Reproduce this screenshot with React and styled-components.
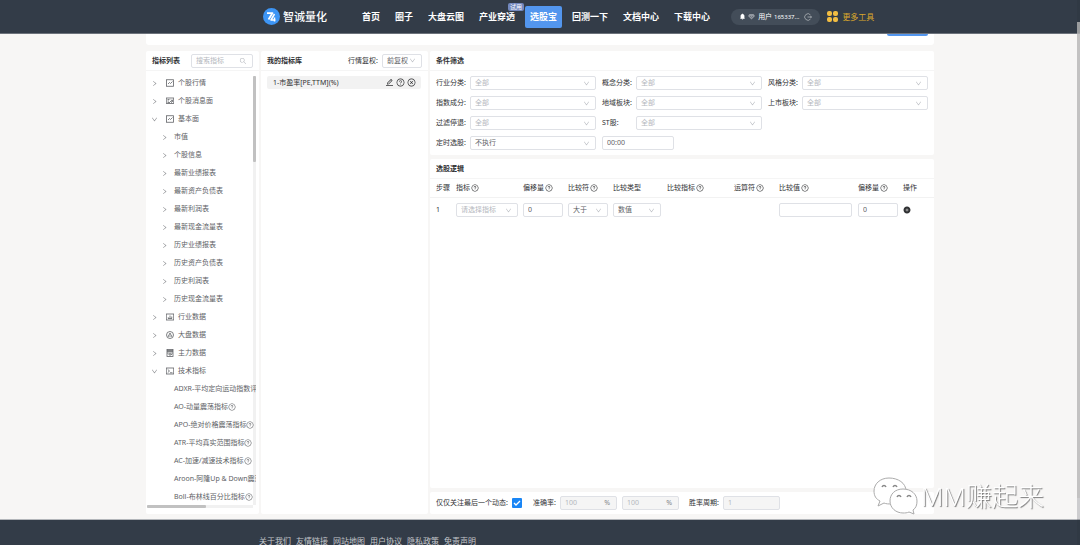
import React from 'react';
import styled, { createGlobalStyle, css } from 'styled-components';
import {
  AiOutlineQuestionCircle,
  AiOutlineCloseCircle,
  AiOutlineEdit,
  AiOutlineDown,
  AiOutlineRight,
  AiOutlineSearch,
  AiFillPlusCircle,
  AiFillBell,
} from 'react-icons/ai';

const GlobalStyle = createGlobalStyle`
  * { box-sizing: border-box; }
  html, body { margin: 0; overflow: hidden; }
  body {
    background: #f7f6f5;
    color: #303133;
    font: 7px/14px "Noto Sans", "Noto Sans CJK SC", sans-serif;
  }
  button, input, select { font: inherit; color: inherit; margin: 0; }
  button { display: block; border: 0; padding: 0; background: none; cursor: pointer; }
  a { color: inherit; text-decoration: none; }
  ul { list-style: none; margin: 0; padding: 0; }
  svg { display: block; flex: none; }
`;

/* ---------- header ---------- */

const Header = styled.header`
  position: relative;
  z-index: 2;
  height: 34px;
  background: #333c48;
  border-bottom: 1px solid #6c727b;
`;

const HeaderInner = styled.div`
  display: flex;
  align-items: center;
  max-width: 788px;
  height: 33px;
  margin: 0 auto;
  padding-left: 117px;
`;

const Brand = styled.a`
  display: flex;
  align-items: center;
  gap: 3px;
  width: 99px;
  color: #fff;
  font-size: 11px;
  font-weight: 500;
`;

const Nav = styled.nav`
  display: flex;
  align-items: center;
  gap: 15px;
  color: #fff;
  font-size: 9px;
  font-weight: 700;
  white-space: nowrap;
`;

const NavLink = styled.a`
  position: relative;
  line-height: 22px;
  ${(p) =>
    p.$active &&
    css`
      margin: 0 -5px;
      padding: 0 5px;
      border-radius: 2px;
      background: #5396ee;
    `}
`;

const TrialTag = styled.span`
  position: absolute;
  top: -3px;
  right: -9px;
  padding: 0 2px;
  border-radius: 2px;
  background: #7388bd;
  font-size: 6px;
  font-weight: 400;
  line-height: 8px;
`;

const UserPill = styled.button`
  display: flex;
  align-items: center;
  gap: 2px;
  height: 16px;
  margin-left: 21px;
  padding: 0 8px;
  border-radius: 8px;
  background: #434d59;
  color: #fff;
  white-space: nowrap;
`;

const UserName = styled.span`
  margin: 0 3px 0 1px;
`;

const UserNumber = styled.span`
  font-size: 6px;
`;

const MoreTools = styled.a`
  display: flex;
  align-items: center;
  gap: 4px;
  margin-left: 7px;
  color: #d9a72c;
  font-size: 8px;
  white-space: nowrap;
`;

/* ---------- page frame ---------- */

const Container = styled.div`
  max-width: 788px;
  margin: 0 auto;
`;

const TopStrip = styled.div`
  display: flex;
  justify-content: flex-end;
  align-items: flex-start;
  height: 11px;
  margin-bottom: 6px;
  padding-right: 6px;
  border-radius: 0 0 3px 3px;
  background: #fff;
`;

const StripButton = styled.button`
  width: 41px;
  height: 2px;
  border-radius: 0 0 2px 2px;
  background: #5396ee;
`;

const Columns = styled.main`
  display: grid;
  grid-template-columns: 113px 167px minmax(0, 1fr);
  gap: 2px;
  height: calc(100vh - 82px);
`;

const RightColumn = styled.div`
  display: flex;
  flex-direction: column;
  gap: 4px;
  min-height: 0;
`;

const Card = styled.section`
  display: flex;
  flex-direction: column;
  flex: ${(p) => (p.$grow ? '1' : 'none')};
  min-width: 0;
  min-height: 0;
  border-radius: 2px;
  background: #fff;
`;

const CardHead = styled.div`
  display: flex;
  align-items: center;
  justify-content: space-between;
  flex: none;
  height: 20px;
  padding: 0 6px;
  border-bottom: 1px solid #f5f5f5;
  white-space: nowrap;
`;

const Title = styled.h2`
  margin: 0;
  font-size: 7px;
  font-weight: 700;
`;

/* ---------- fields ---------- */

const Frame = styled.div`
  position: relative;
  display: flex;
  align-items: center;
  flex: ${(p) => (p.$width ? 'none' : '1')};
  width: ${(p) => (p.$width ? `${p.$width}px` : 'auto')};
  height: 14px;
  border: 1px solid #dfe1e6;
  border-radius: 2px;
  background: ${(p) => (p.$disabled ? '#f5f5f5' : '#fff')};
  color: ${(p) => (p.$muted ? '#b4b7bd' : '#606266')};
  svg { margin-right: 5px; color: #b4b7bd; }
`;

const NativeSelect = styled.select`
  appearance: none;
  flex: 1;
  min-width: 0;
  height: 12px;
  padding: 0 0 0 4px;
  border: 0;
  outline: 0;
  background: none;
  line-height: 12px;
`;

const NativeInput = styled.input`
  flex: 1;
  min-width: 0;
  width: 100%;
  height: 12px;
  padding: 0 4px;
  border: 0;
  outline: 0;
  background: none;
  line-height: 12px;
  &::placeholder { color: #b4b7bd; }
`;

const Unit = styled.span`
  padding-right: 6px;
  color: #85878b;
`;

const HeadField = styled.div`
  display: flex;
  align-items: center;
  gap: 4px;
`;

/* ---------- indicator tree ---------- */

const TreeArea = styled.div`
  display: grid;
  grid-template-columns: minmax(0, 1fr) 3px;
  flex: 1;
  min-height: 0;
  padding: 3px 3px 0 1px;
`;

const TreeView = styled.ul`
  z-index: 1;
  grid-column: 1 / 3;
  grid-row: 1;
  overflow: hidden;
  min-height: 0;
`;

const TreeRow = styled.button`
  display: flex;
  align-items: center;
  width: 100%;
  height: 18px;
  padding-left: ${(p) => [4, 14, 27][p.$level]}px;
  color: #606266;
  white-space: nowrap;
`;

const Arrow = styled.span`
  display: flex;
  width: ${(p) => (p.$level ? 13 : 15)}px;
  color: #85878b;
`;

const TreeIcon = styled.span`
  display: flex;
  width: 12px;
`;

const VerticalTrack = styled.div`
  grid-column: 2;
  grid-row: 1;
  margin-top: 2px;
  background: #f1f1f1;
`;

const VerticalThumb = styled.div`
  height: 20%;
  border-radius: 1px;
  background: #c1c1c1;
`;

const HorizontalTrack = styled.div`
  flex: none;
  height: 3px;
  margin: 0 6px 6px 1px;
  background: #f1f1f1;
`;

const HorizontalThumb = styled.div`
  width: 56%;
  height: 3px;
  border-radius: 1px;
  background: #c1c1c1;
`;

/* ---------- my indicators ---------- */

const SavedItem = styled.div`
  display: flex;
  align-items: center;
  justify-content: space-between;
  height: 13px;
  margin: 5px 7px 0 6px;
  padding: 0 5px 0 6px;
  border-radius: 2px;
  background: #f2f2f2;
  white-space: nowrap;
`;

const Actions = styled.div`
  display: flex;
  gap: 2px;
`;

/* ---------- filters ---------- */

const FilterGrid = styled.div`
  display: grid;
  grid-template-columns: repeat(3, minmax(0, 1fr));
  gap: 6px;
  padding: 5px 6px;
`;

const FilterCell = styled.div`
  display: flex;
  align-items: center;
  grid-column: ${(p) => (p.$first ? '1' : 'auto')};
`;

const FilterLabel = styled.label`
  width: 34px;
  white-space: nowrap;
`;

/* ---------- logic table ---------- */

const LogicTable = styled.table`
  width: 100%;
  table-layout: fixed;
  border-collapse: collapse;
  th, td { padding: 0; text-align: left; font-weight: 400; white-space: nowrap; }
  th { height: 18px; border-bottom: 1px solid #f2f2f2; }
  td { height: 26px; }
  th:first-child, td:first-child { padding-left: 6px; }
`;

const HeadCell = styled.span`
  display: flex;
  align-items: center;
  gap: 1px;
`;

/* ---------- accuracy bar ---------- */

const BottomBar = styled.div`
  display: flex;
  align-items: center;
  height: 22px;
  padding: 0 6px;
  white-space: nowrap;
`;

const BarLabel = styled.label`
  width: ${(p) => p.$width}px;
`;

const CheckWrap = styled.span`
  position: relative;
  display: flex;
  width: 10px;
  height: 10px;
  margin-right: 11px;
  svg { position: absolute; inset: 0; pointer-events: none; }
`;

const Checkbox = styled.input`
  appearance: none;
  width: 10px;
  height: 10px;
  border-radius: 1px;
  background: #b9bcc2;
  &:checked { background: #1a86f5; }
`;

const BarFields = styled.div`
  display: flex;
  gap: 5px;
  margin-right: 10px;
`;

/* ---------- footer and overlays ---------- */

const Footer = styled.footer`
  margin-top: 5px;
  padding-top: 17px;
  border-top: 1px solid #b3b6ba;
  background: #333c48;
  color: #c4c7cb;
  font-size: 8px;
  line-height: 8px;
`;

const FooterLinks = styled.div`
  display: flex;
  gap: 5px;
  max-width: 788px;
  margin: 0 auto;
  padding-left: 113px;
`;

const PageTrack = styled.div`
  position: fixed;
  z-index: 3;
  top: 0;
  right: 0;
  bottom: 0;
  width: 3px;
  padding-top: 22px;
  background: rgba(40, 45, 54, 0.2);
`;

const PageThumb = styled.div`
  height: 91%;
  background: rgba(190, 190, 190, 0.75);
`;

const Watermark = styled.div`
  position: fixed;
  z-index: 4;
  right: 36px;
  bottom: 29px;
  display: flex;
  align-items: center;
  gap: 3px;
  color: #fff;
  font-size: 26px;
  font-weight: 300;
  line-height: 40px;
  text-shadow: 1px 1px 1px #777;
`;

/* ---------- drawings ---------- */

const BrandMark = () => (
  <svg width="17" height="17" viewBox="0 0 34 34">
    <circle cx="17" cy="17" r="17" fill="#3d95f5" />
    <path d="M8 10h11L11 23" fill="none" stroke="#fff" strokeWidth="3.5" strokeLinejoin="round" />
    <path d="M23 12l-7 12h9M23 19v8" fill="none" stroke="#fff" strokeWidth="3" strokeLinejoin="round" />
  </svg>
);

const glyphs = {
  trend: (
    <>
      <rect x="1" y="1.5" width="14" height="13" />
      <path d="M4 10l3-3 2 2 4-4" />
    </>
  ),
  news: (
    <>
      <rect x="0.5" y="2" width="15" height="11" />
      <path d="M3 5h4M3 8h3M3 11h5M8 8l3 3 3-6M10 5l3 5" />
    </>
  ),
  bars: (
    <>
      <rect x="0.5" y="2" width="15" height="12" />
      <path d="M8 5v6M4.500 8.500v2.500M11.500 7v4M4 11h8" />
    </>
  ),
  market: (
    <>
      <circle cx="8" cy="8" r="7" />
      <path d="M4 12l4-8 4 8M6 9l2 2 2-2" />
    </>
  ),
  calc: (
    <>
      <rect x="2" y="1" width="12" height="14" />
      <path d="M2 3h12M2 5h12M2 8h12M5 11h2M9 11h3M8 8v6" />
    </>
  ),
  code: (
    <>
      <rect x="0.5" y="2" width="15" height="12" />
      <path d="M3.500 5l3.500 3-3.500 3M8 11.500h5" />
    </>
  ),
};

const Glyph = ({ name }) => (
  <svg width="8" height="8" viewBox="0 0 16 16" fill="none" stroke="currentColor" strokeWidth="1.6">
    {glyphs[name]}
  </svg>
);

const WechatMark = () => (
  <svg width="46" height="40" viewBox="0 0 46 40" fill="#fff" stroke="#aaa" strokeWidth="1">
    <path d="M17 2C8 2 2 8 2 15c0 5 2 8 6 10l-2 5 6-3c2 1 5 1 8 1 8 0 14-5 14-13S26 2 17 2z" />
    <path d="M31 13c-8 0-13 5-13 12s6 12 13 12c2 0 4 0 6-1l5 2-1-4c3-2 4-5 4-9 0-7-6-12-14-12z" />
    <path
      d="M10 11c1-2 3-2 4 0M21 11c1-2 3-2 4 0M25 21c1-2 3-2 4 0M35 21c1-2 3-2 4 0"
      fill="none"
      stroke="#888"
      strokeWidth="1.5"
    />
  </svg>
);

/* ---------- parts ---------- */

const Select = ({ id, label, value, width, muted }) => (
  <Frame $width={width} $muted={muted}>
    <NativeSelect id={id} aria-label={label} defaultValue={value}>
      <option>{value}</option>
    </NativeSelect>
    <AiOutlineDown size={7} />
  </Frame>
);

const Input = ({ id, label, value, width, disabled, unit }) => (
  <Frame $width={width} $disabled={disabled} $muted={disabled}>
    <NativeInput id={id} aria-label={label} defaultValue={value} disabled={disabled} />
    {unit && <Unit>{unit}</Unit>}
  </Frame>
);

const navItems = ['首页', '圈子', '大盘云图', '产业穿透', '选股宝', '回测一下', '文档中心', '下载中心'];

const tree = [
  { text: '个股行情', icon: 'trend' },
  { text: '个股消息面', icon: 'news' },
  { text: '基本面', icon: 'trend', open: true },
  { text: '市值', level: 1 },
  { text: '个股信息', level: 1 },
  { text: '最新业绩报表', level: 1 },
  { text: '最新资产负债表', level: 1 },
  { text: '最新利润表', level: 1 },
  { text: '最新现金流量表', level: 1 },
  { text: '历史业绩报表', level: 1 },
  { text: '历史资产负债表', level: 1 },
  { text: '历史利润表', level: 1 },
  { text: '历史现金流量表', level: 1 },
  { text: '行业数据', icon: 'bars' },
  { text: '大盘数据', icon: 'market' },
  { text: '主力数据', icon: 'calc' },
  { text: '技术指标', icon: 'code', open: true },
  { text: 'ADXR-平均定向运动指数评级', level: 2 },
  { text: 'AO-动量震荡指标', level: 2 },
  { text: 'APO-绝对价格震荡指标', level: 2 },
  { text: 'ATR-平均真实范围指标', level: 2 },
  { text: 'AC-加速/减速技术指标', level: 2 },
  { text: 'Aroon-阿隆Up & Down震荡指标', level: 2 },
  { text: 'Boll-布林线百分比指标', level: 2 },
];

const filters = [
  { id: 'industry', label: '行业分类:' },
  { id: 'concept', label: '概念分类:' },
  { id: 'style', label: '风格分类:' },
  { id: 'index', label: '指数成分:' },
  { id: 'region', label: '地域板块:' },
  { id: 'board', label: '上市板块:' },
  { id: 'halt', label: '过滤停退:' },
  { id: 'st', label: 'ST股:' },
];

const columns = [
  { text: '步骤', width: 26 },
  { text: '指标', width: 67, help: true },
  { text: '偏移量', width: 45, help: true },
  { text: '比较符', width: 45, help: true },
  { text: '比较类型', width: 54 },
  { text: '比较指标', width: 67, help: true },
  { text: '运算符', width: 45, help: true },
  { text: '比较值', width: 79, help: true },
  { text: '偏移量', width: 45, help: true },
  { text: '操作', width: 31 },
];

const TreeItem = ({ text, icon, open, level = 0 }) => (
  <li>
    <TreeRow $level={level}>
      {level < 2 && (
        <Arrow $level={level}>{open ? <AiOutlineDown size={7} /> : <AiOutlineRight size={7} />}</Arrow>
      )}
      {icon && (
        <TreeIcon>
          <Glyph name={icon} />
        </TreeIcon>
      )}
      {text}
      {level === 2 && <AiOutlineQuestionCircle size={8} />}
    </TreeRow>
  </li>
);

export default function App() {
  return (
    <>
      <GlobalStyle />
      <Header>
        <HeaderInner>
          <Brand href="#">
            <BrandMark />
            智诚量化
          </Brand>
          <Nav>
            {navItems.map((item) => (
              <NavLink key={item} href="#" $active={item === '选股宝'}>
                {item}
                {item === '产业穿透' && <TrialTag>试用</TrialTag>}
              </NavLink>
            ))}
          </Nav>
          <UserPill>
            <AiFillBell size={7} />
            <svg width="7" height="7" viewBox="0 0 14 14">
              <path d="M3 2h8l3 4-7 7-7-7z" fill="#9298a0" />
              <path d="M4 6l3 3 3-3" fill="none" stroke="#5d6570" strokeWidth="1.5" />
            </svg>
            <UserName>
              用户 <UserNumber>165337...</UserNumber>
            </UserName>
            <svg width="8" height="8" viewBox="0 0 16 16" fill="none" stroke="#c4c7cb" strokeWidth="1.3">
              <path d="M13 4a6.5 6.5 0 1 0 0 8M7 8h8M13 6l2 2-2 2" />
            </svg>
          </UserPill>
          <MoreTools href="#">
            <svg width="11" height="11" viewBox="0 0 22 22" fill="#f2bd42">
              <rect width="10" height="10" rx="4" />
              <rect x="12" width="10" height="10" rx="4" />
              <rect y="12" width="10" height="10" rx="4" />
              <rect x="12" y="12" width="10" height="10" rx="4" />
            </svg>
            更多工具
          </MoreTools>
        </HeaderInner>
      </Header>

      <Container>
        <TopStrip>
          <StripButton aria-label="保存" />
        </TopStrip>
        <Columns>
          <Card>
            <CardHead>
              <Title>指标列表</Title>
              <Frame $width={62}>
                <NativeInput type="text" aria-label="搜索指标" placeholder="搜索指标" />
                <AiOutlineSearch size={8} />
              </Frame>
            </CardHead>
            <TreeArea>
              <TreeView>
                {tree.map((node) => (
                  <TreeItem key={node.text} {...node} />
                ))}
              </TreeView>
              <VerticalTrack>
                <VerticalThumb />
              </VerticalTrack>
            </TreeArea>
            <HorizontalTrack>
              <HorizontalThumb />
            </HorizontalTrack>
          </Card>

          <Card>
            <CardHead>
              <Title>我的指标库</Title>
              <HeadField>
                <label htmlFor="adjust">行情复权:</label>
                <Select id="adjust" value="前复权" width={40} />
              </HeadField>
            </CardHead>
            <SavedItem>
              1-市盈率[PE,TTM](%)
              <Actions>
                <button aria-label="编辑"><AiOutlineEdit size={9} /></button>
                <button aria-label="说明"><AiOutlineQuestionCircle size={9} /></button>
                <button aria-label="删除"><AiOutlineCloseCircle size={9} /></button>
              </Actions>
            </SavedItem>
          </Card>

          <RightColumn>
            <Card>
              <CardHead>
                <Title>条件筛选</Title>
              </CardHead>
              <FilterGrid>
                {filters.map((f) => (
                  <FilterCell key={f.id}>
                    <FilterLabel htmlFor={f.id}>{f.label}</FilterLabel>
                    <Select id={f.id} value="全部" muted />
                  </FilterCell>
                ))}
                <FilterCell $first>
                  <FilterLabel htmlFor="schedule">定时选股:</FilterLabel>
                  <Select id="schedule" value="不执行" />
                </FilterCell>
                <FilterCell>
                  <Input label="执行时间" value="00:00" width={72} />
                </FilterCell>
              </FilterGrid>
            </Card>

            <Card $grow>
              <CardHead>
                <Title>选股逻辑</Title>
              </CardHead>
              <LogicTable>
                <colgroup>
                  {columns.map((c, i) => (
                    <col key={i} width={c.width} />
                  ))}
                </colgroup>
                <thead>
                  <tr>
                    {columns.map((c, i) => (
                      <th key={i}>
                        <HeadCell>
                          {c.text}
                          {c.help && <AiOutlineQuestionCircle size={8} />}
                        </HeadCell>
                      </th>
                    ))}
                  </tr>
                </thead>
                <tbody>
                  <tr>
                    <td>1</td>
                    <td><Select label="指标" value="请选择指标" width={62} muted /></td>
                    <td><Input label="偏移量" value="0" width={40} /></td>
                    <td><Select label="比较符" value="大于" width={40} /></td>
                    <td><Select label="比较类型" value="数值" width={48} /></td>
                    <td />
                    <td />
                    <td><Input label="比较值" value="" width={73} /></td>
                    <td><Input label="比较偏移量" value="0" width={40} /></td>
                    <td>
                      <button aria-label="添加"><AiFillPlusCircle size={8} /></button>
                    </td>
                  </tr>
                </tbody>
              </LogicTable>
            </Card>

            <Card>
              <BottomBar>
                <BarLabel htmlFor="latest" $width={76}>仅仅关注最后一个动态:</BarLabel>
                <CheckWrap>
                  <Checkbox id="latest" type="checkbox" defaultChecked />
                  <svg viewBox="0 0 10 10" fill="none" stroke="#fff" strokeWidth="1.3">
                    <path d="M2 5l2 2 4-4" />
                  </svg>
                </CheckWrap>
                <BarLabel htmlFor="accuracy" $width={27}>准确率:</BarLabel>
                <BarFields>
                  <Input id="accuracy" value="100" width={57} unit="%" disabled />
                  <Input label="准确率上限" value="100" width={57} unit="%" disabled />
                </BarFields>
                <BarLabel htmlFor="period" $width={34}>胜率周期:</BarLabel>
                <Input id="period" value="1" width={57} disabled />
              </BottomBar>
            </Card>
          </RightColumn>
        </Columns>
      </Container>

      <Footer>
        <FooterLinks>
          {['关于我们', '友情链接', '网站地图', '用户协议', '隐私政策', '免责声明'].map((t) => (
            <a key={t} href="#">{t}</a>
          ))}
        </FooterLinks>
      </Footer>

      <PageTrack>
        <PageThumb />
      </PageTrack>
      <Watermark>
        <WechatMark />
        MM赚起来
      </Watermark>
    </>
  );
}
